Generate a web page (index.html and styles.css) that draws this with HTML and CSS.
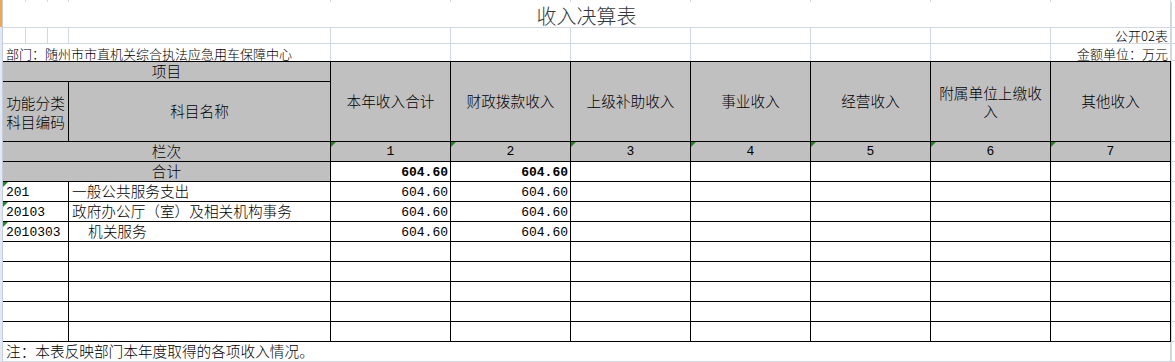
FILE: index.html
```html
<!DOCTYPE html>
<html lang="zh-CN">
<head>
<meta charset="utf-8">
<title>收入决算表</title>
<link rel="stylesheet" href="styles.css">
</head>
<body>
<div class="page">
  <div class="rowhead"></div>
  <div class="sheet">
    <!-- partial row above title -->
    <div class="stub"></div><div class="stub"></div><div class="stub"></div><div class="stub"></div>
    <div class="stub"></div><div class="stub"></div><div class="stub"></div><div class="stub"></div>
    <div class="stub"></div><div class="stub"></div><div class="stub"></div><div></div>

    <!-- title -->
    <div class="title">收入决算表</div><div class="ext"></div>

    <!-- form number -->
    <div class="g"></div><div class="g"></div><div class="g"></div><div class="g"></div><div class="g"></div>
    <div class="g"></div><div class="g"></div><div class="g"></div><div class="g"></div><div class="g"></div>
    <div class="g info">公开02表</div><div class="ext"></div>

    <!-- department / unit -->
    <div class="g nb dept">部门：随州市市直机关综合执法应急用车保障中心</div>
    <div class="g nb"></div><div class="g nb"></div><div class="g nb"></div>
    <div class="g nb"></div><div class="g nb"></div><div class="g nb"></div>
    <div class="g nb info">金额单位：万元</div><div class="ext"></div>

    <!-- header -->
    <div class="c hd top span4">项目</div>
    <div class="c hd top tall">本年收入合计</div>
    <div class="c hd top tall">财政拨款收入</div>
    <div class="c hd top tall">上级补助收入</div>
    <div class="c hd top tall">事业收入</div>
    <div class="c hd top tall">经营收入</div>
    <div class="c hd top tall"><span class="lines l18">附属单位上缴收<br>入</span></div>
    <div class="c hd top tall">其他收入</div>
    <div class="ext tall"></div>
    <div class="c hd span3"><span class="lines">功能分类<br>科目编码</span></div>
    <div class="c hd">科目名称</div>

    <!-- column numbers -->
    <div class="c hd span4">栏次</div>
    <div class="c hd num tri">1</div>
    <div class="c hd num tri">2</div>
    <div class="c hd num tri">3</div>
    <div class="c hd num tri">4</div>
    <div class="c hd num tri">5</div>
    <div class="c hd num tri">6</div>
    <div class="c hd num tri">7</div>
    <div class="ext"></div>

    <!-- total -->
    <div class="c hd span4">合计</div>
    <div class="c num val bold">604.60</div>
    <div class="c num val bold">604.60</div>
    <div class="c"></div><div class="c"></div><div class="c"></div><div class="c"></div><div class="c"></div>
    <div class="ext"></div>

    <!-- data rows -->
    <div class="c span3 num code tri">201</div>
    <div class="c name">一般公共服务支出</div>
    <div class="c num val">604.60</div>
    <div class="c num val">604.60</div>
    <div class="c"></div><div class="c"></div><div class="c"></div><div class="c"></div><div class="c"></div>
    <div class="ext"></div>

    <div class="c span3 num code tri">20103</div>
    <div class="c name">政府办公厅（室）及相关机构事务</div>
    <div class="c num val">604.60</div>
    <div class="c num val">604.60</div>
    <div class="c"></div><div class="c"></div><div class="c"></div><div class="c"></div><div class="c"></div>
    <div class="ext"></div>

    <div class="c span3 num code tri">2010303</div>
    <div class="c name indent">机关服务</div>
    <div class="c num val">604.60</div>
    <div class="c num val">604.60</div>
    <div class="c"></div><div class="c"></div><div class="c"></div><div class="c"></div><div class="c"></div>
    <div class="ext"></div>

    <!-- empty rows -->
    <div class="c span3"></div><div class="c"></div>
    <div class="c"></div><div class="c"></div><div class="c"></div><div class="c"></div><div class="c"></div><div class="c"></div><div class="c"></div>
    <div class="ext"></div>

    <div class="c span3"></div><div class="c"></div>
    <div class="c"></div><div class="c"></div><div class="c"></div><div class="c"></div><div class="c"></div><div class="c"></div><div class="c"></div>
    <div class="ext"></div>

    <div class="c span3"></div><div class="c"></div>
    <div class="c"></div><div class="c"></div><div class="c"></div><div class="c"></div><div class="c"></div><div class="c"></div><div class="c"></div>
    <div class="ext"></div>

    <div class="c span3"></div><div class="c"></div>
    <div class="c"></div><div class="c"></div><div class="c"></div><div class="c"></div><div class="c"></div><div class="c"></div><div class="c"></div>
    <div class="ext"></div>

    <div class="c span3"></div><div class="c"></div>
    <div class="c"></div><div class="c"></div><div class="c"></div><div class="c"></div><div class="c"></div><div class="c"></div><div class="c"></div>
    <div class="ext"></div>

    <!-- note -->
    <div class="note">注：本表反映部门本年度取得的各项收入情况。</div>
    <div class="ext"></div>
  </div>
</div>
</body>
</html>
```

FILE: styles.css
```css
* {
  box-sizing: border-box;
}

html,
body {
  margin: 0;
  padding: 0;
  background: #ffffff;
}

body {
  width: 1175px;
  height: 362px;
  overflow: hidden;
}

.page {
  display: flex;
  height: 362px;
}

.rowhead {
  flex: none;
  width: 3px;
  background: linear-gradient(#f3a64a 0, #f3a64a 27px, #e4e8f2 27px, #e4e8f2 100%);
  border-right: 1px solid #c4cee0;
}

.sheet {
  flex: 1;
  display: grid;
  grid-template-columns: 23px 22px 21px 262px repeat(7, 120px) 1fr;
  grid-template-rows: 2px 26px 16px 17px 21px 60px repeat(11, 20px);
  font-family: "Noto Sans CJK SC", sans-serif;
  font-size: 14.67px;
  font-weight: 300;
  color: #000000;
}

/* worksheet gridline cells (outside the bordered table) */
.stub {
  border-right: 1px solid #d0d7e5;
}

.g {
  display: flex;
  align-items: center;
  border-right: 1px solid #d0d7e5;
  border-bottom: 1px solid #d0d7e5;
  font-size: 13px;
  line-height: 1;
  white-space: nowrap;
}

.nb {
  border-bottom: none;
  padding-top: 2px;
}

.dept {
  grid-column: span 4;
  padding-left: 3px;
}

.info {
  justify-content: flex-end;
  padding-right: 2px;
}

.title {
  grid-column: span 11;
  display: flex;
  align-items: center;
  justify-content: center;
  border-right: 1px solid #d0d7e5;
  border-bottom: 1px solid #d0d7e5;
  font-size: 20px;
  line-height: 1;
  color: #333840;
  padding-top: 2px;
}

.ext {
  border-left: 1px solid #d0d7e5;
  border-bottom: 1px solid #d0d7e5;
}

.note {
  grid-column: span 11;
  display: flex;
  align-items: center;
  padding-left: 3px;
  border-right: 1px solid #d0d7e5;
  border-bottom: 1px solid #d0d7e5;
  line-height: 1;
  white-space: nowrap;
}

/* bordered table cells */
.c {
  position: relative;
  display: flex;
  align-items: center;
  justify-content: center;
  border-right: 1px solid #000000;
  border-bottom: 1px solid #000000;
  line-height: 1;
  white-space: nowrap;
}

.top {
  border-top: 1px solid #000000;
}

.hd {
  background: #c0c0c0;
}

.span3 {
  grid-column: span 3;
}

.span4 {
  grid-column: span 4;
}

.tall {
  grid-row: span 2;
}

.lines {
  display: block;
  text-align: center;
  line-height: 19px;
  white-space: normal;
}

.l18 {
  line-height: 18px;
}

.num {
  font-family: "Liberation Mono", "Noto Sans CJK SC", monospace;
  font-size: 13px;
  font-weight: normal;
}

.val {
  justify-content: flex-end;
  padding-right: 2px;
  padding-top: 2px;
}

.bold {
  font-weight: bold;
}

.code {
  justify-content: flex-start;
  padding-left: 3px;
  padding-top: 2px;
}

.name {
  justify-content: flex-start;
  padding-left: 3px;
}

.indent {
  padding-left: 19px;
}

.tri::before {
  content: "";
  position: absolute;
  top: 0;
  left: 0;
  border-top: 5px solid #1d8a1d;
  border-right: 5px solid transparent;
}
```
